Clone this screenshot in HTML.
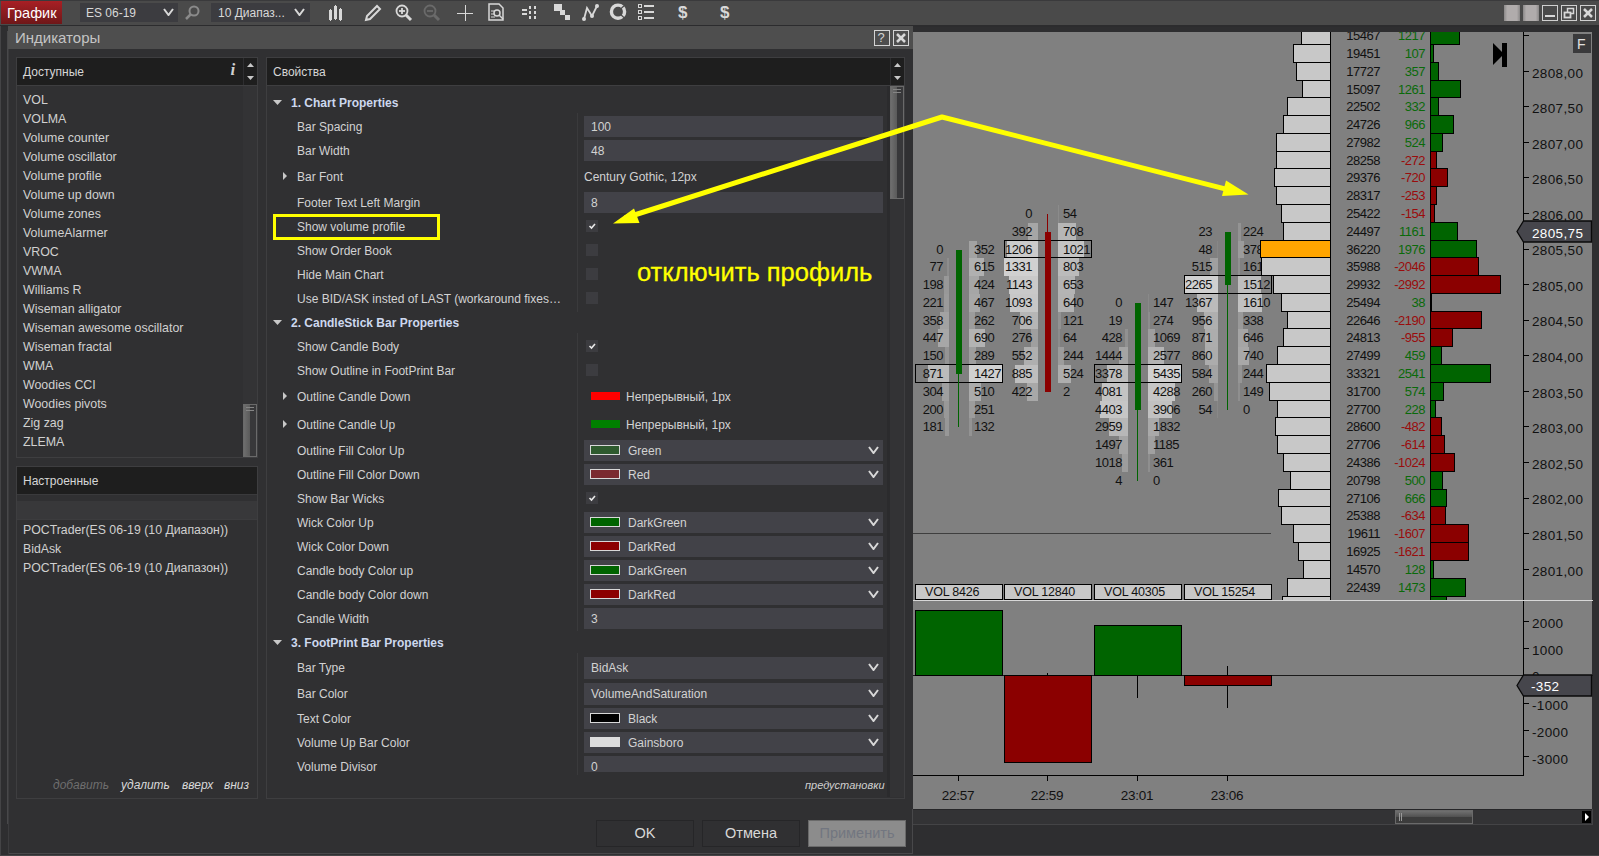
<!DOCTYPE html><html><head><meta charset="utf-8"><style>
html,body{margin:0;padding:0;width:1599px;height:856px;overflow:hidden;background:#2e2e30;font-family:"Liberation Sans", sans-serif;}
.t{position:absolute;white-space:nowrap;line-height:14px;height:14px;margin-top:-7px;font-size:12px;color:#d2d2d2;}
.r{text-align:right;}
.c{position:absolute;white-space:nowrap;line-height:14px;height:14px;margin-top:-7px;font-size:13px;color:#000;}

</style></head><body>
<div style="position:absolute;left:0px;top:0px;width:1599px;height:25px;background:#4a4a4a;"></div>
<div style="position:absolute;left:0px;top:0px;width:1599px;height:1px;background:#3a3a3c;"></div>
<div style="position:absolute;left:0px;top:25px;width:1599px;height:2px;background:#2c2c2e;"></div>
<div style="position:absolute;left:1px;top:1px;width:61px;height:23px;background:linear-gradient(#a81f24,#6f1719);"></div>
<div class="t" style="left:7px;top:12.5px;font-size:14.5px;color:#fff;line-height:18px;height:18px;margin-top:-9px;">График</div>
<div style="position:absolute;left:80px;top:3px;width:98px;height:19px;background:#3c3c40;"></div>
<div class="t" style="left:86px;top:12.5px;font-size:12px;color:#d8d8d8;">ES 06-19</div>
<svg style="position:absolute;left:163px;top:8px" width="11" height="8"><polyline points="1,1 5.5,7 10,1" fill="none" stroke="#d8d8d8" stroke-width="2"/></svg>
<svg style="position:absolute;left:183px;top:4px" width="18" height="16"><circle cx="11" cy="7" r="4.5" fill="none" stroke="#8a8a8a" stroke-width="2"/><line x1="8" y1="10" x2="3" y2="15" stroke="#8a8a8a" stroke-width="2.5"/></svg>
<div style="position:absolute;left:211px;top:3px;width:99px;height:19px;background:#3c3c40;"></div>
<div class="t" style="left:218px;top:12.5px;font-size:12px;color:#d8d8d8;">10 Диапаз...</div>
<svg style="position:absolute;left:294px;top:8px" width="11" height="8"><polyline points="1,1 5.5,7 10,1" fill="none" stroke="#d8d8d8" stroke-width="2"/></svg>
<svg style="position:absolute;left:326px;top:0px" width="20" height="24"><g fill="#d8d8d8"><rect x="3" y="10" width="3" height="10"/><rect x="4" y="9" width="1" height="12"/><rect x="8" y="6" width="3" height="13"/><rect x="9" y="5" width="1" height="15"/><rect x="13" y="9" width="3" height="11"/><rect x="14" y="8" width="1" height="13"/></g></svg>
<svg style="position:absolute;left:363px;top:3px" width="20" height="20"><path d="M3,17 L4,13 L14,3 L17,6 L7,16 Z" fill="none" stroke="#d8d8d8" stroke-width="2"/></svg>
<svg style="position:absolute;left:394px;top:3px" width="20" height="20"><circle cx="8" cy="8" r="5.5" fill="none" stroke="#d8d8d8" stroke-width="1.8"/><line x1="5" y1="8" x2="11" y2="8" stroke="#d8d8d8" stroke-width="1.8"/><line x1="8" y1="5" x2="8" y2="11" stroke="#d8d8d8" stroke-width="1.8"/><line x1="12" y1="12" x2="17" y2="17" stroke="#d8d8d8" stroke-width="3"/></svg>
<svg style="position:absolute;left:422px;top:3px" width="20" height="20"><circle cx="8" cy="8" r="5.5" fill="none" stroke="#6a6a6a" stroke-width="1.8"/><line x1="5" y1="8" x2="11" y2="8" stroke="#6a6a6a" stroke-width="1.8"/><line x1="12" y1="12" x2="17" y2="17" stroke="#6a6a6a" stroke-width="3"/></svg>
<svg style="position:absolute;left:456px;top:3px" width="20" height="20"><line x1="1" y1="10.5" x2="17" y2="10.5" stroke="#d8d8d8" stroke-width="1"/><line x1="9.5" y1="2" x2="9.5" y2="18" stroke="#d8d8d8" stroke-width="1"/></svg>
<svg style="position:absolute;left:487px;top:3px" width="20" height="20"><path d="M2,1 L12,1 L16,5 L16,17 L2,17 Z" fill="none" stroke="#d8d8d8" stroke-width="1.5"/><circle cx="10" cy="10" r="3" fill="none" stroke="#d8d8d8" stroke-width="1.5"/><line x1="12" y1="12" x2="16" y2="16" stroke="#d8d8d8" stroke-width="1.5"/><line x1="4" y1="8" x2="7" y2="8" stroke="#d8d8d8"/><line x1="4" y1="11" x2="7" y2="11" stroke="#d8d8d8"/><line x1="4" y1="14" x2="8" y2="14" stroke="#d8d8d8"/></svg>
<svg style="position:absolute;left:521px;top:3px" width="20" height="20"><g fill="#d8d8d8"><rect x="1" y="6" width="5" height="2"/><rect x="1" y="10" width="5" height="2"/><rect x="8" y="3" width="2" height="3"/><rect x="8" y="8" width="2" height="3"/><rect x="8" y="13" width="2" height="3"/><rect x="13" y="3" width="2" height="3"/><rect x="13" y="8" width="2" height="3"/><rect x="13" y="13" width="2" height="3"/></g></svg>
<svg style="position:absolute;left:553px;top:3px" width="20" height="20"><g fill="#d8d8d8"><rect x="1" y="1" width="8" height="7"/><rect x="7" y="7" width="5" height="5"/><rect x="12" y="12" width="5" height="5"/></g></svg>
<svg style="position:absolute;left:581px;top:3px" width="20" height="20"><polyline points="3,16 6,5 11,13 16,3" fill="none" stroke="#d8d8d8" stroke-width="1.8"/><circle cx="3" cy="16" r="2" fill="#d8d8d8"/><circle cx="11" cy="13" r="2" fill="#d8d8d8"/><circle cx="16" cy="3" r="2" fill="#d8d8d8"/></svg>
<svg style="position:absolute;left:608px;top:0px" width="20" height="24"><circle cx="10" cy="11.7" r="6.6" fill="none" stroke="#d8d8d8" stroke-width="3.4"/><line x1="12" y1="9.5" x2="17" y2="5" stroke="#4a4a4a" stroke-width="1.1"/><line x1="12" y1="14" x2="17" y2="18.5" stroke="#4a4a4a" stroke-width="1.1"/></svg>
<svg style="position:absolute;left:637px;top:3px" width="20" height="20"><g fill="none" stroke="#d8d8d8"><rect x="1.5" y="1.5" width="3" height="3"/><rect x="1.5" y="7.5" width="3" height="3"/><rect x="1.5" y="13.5" width="3" height="3"/></g><g fill="#d8d8d8"><rect x="7" y="2" width="10" height="2"/><rect x="7" y="8" width="10" height="2"/><rect x="7" y="14" width="10" height="2"/></g></svg>
<div class="t" style="left:678px;top:13px;font-size:17px;font-weight:bold;color:#d8d8d8;line-height:20px;height:20px;margin-top:-10px;">$</div>
<div class="t" style="left:720px;top:13px;font-size:17px;font-weight:bold;color:#d8d8d8;line-height:20px;height:20px;margin-top:-10px;">$</div>
<div style="position:absolute;left:1504px;top:5px;width:16px;height:16px;background:linear-gradient(90deg,#8a8888,#b0acac 20%,#b0acac 80%,#8a8888);"></div>
<div style="position:absolute;left:1523px;top:5px;width:16px;height:16px;background:linear-gradient(90deg,#8a8888,#b0acac 20%,#b0acac 80%,#8a8888);"></div>
<div style="position:absolute;left:1542px;top:5px;width:14px;height:14px;border:1px solid #d0d0d0;background:#4a4a4a;"></div>
<div style="position:absolute;left:1561px;top:5px;width:14px;height:14px;border:1px solid #d0d0d0;background:#4a4a4a;"></div>
<div style="position:absolute;left:1580px;top:5px;width:14px;height:14px;border:1px solid #d0d0d0;background:#4a4a4a;"></div>
<div style="position:absolute;left:1545px;top:15px;width:10px;height:2px;background:#d8d8d8;"></div>
<svg style="position:absolute;left:1562px;top:6px" width="14" height="14"><rect x="5.5" y="2.5" width="6" height="5" fill="none" stroke="#d8d8d8" stroke-width="1.5"/><rect x="2.5" y="6.5" width="6" height="5" fill="#4a4a4a" stroke="#d8d8d8" stroke-width="1.8"/></svg>
<svg style="position:absolute;left:1581px;top:6px" width="14" height="14"><line x1="3" y1="3" x2="11" y2="11" stroke="#d8d8d8" stroke-width="2.5"/><line x1="11" y1="3" x2="3" y2="11" stroke="#d8d8d8" stroke-width="2.5"/></svg>
<div style="position:absolute;left:0px;top:27px;width:8px;height:829px;background:#2e2e30;"></div>
<div style="position:absolute;left:8px;top:26px;width:905px;height:830px;background:#303032;"></div>
<div style="position:absolute;left:7px;top:31px;width:1px;height:793px;background:#48484a;"></div>
<div style="position:absolute;left:8px;top:26px;width:905px;height:23px;background:#4e4e4e;"></div>
<div class="t" style="left:15px;top:38px;font-size:15px;color:#c4c4c4;line-height:18px;height:18px;margin-top:-9px;">Индикаторы</div>
<div style="position:absolute;left:874px;top:30px;width:14px;height:14px;border:1px solid #d4d4d4;"></div>
<div class="t" style="left:877.5px;top:37.5px;font-size:13px;color:#d4d4d4;">?</div>
<div style="position:absolute;left:893px;top:30px;width:14px;height:14px;border:1px solid #d4d4d4;"></div>
<svg style="position:absolute;left:894px;top:31px" width="14" height="14"><line x1="3" y1="3" x2="11" y2="11" stroke="#d8d8d8" stroke-width="2.5"/><line x1="11" y1="3" x2="3" y2="11" stroke="#d8d8d8" stroke-width="2.5"/></svg>
<div style="position:absolute;left:8px;top:853px;width:905px;height:1px;background:#48484a;"></div>
<div style="position:absolute;left:0px;top:26px;width:1px;height:830px;background:#444446;"></div>
<div style="position:absolute;left:8px;top:49px;width:1px;height:805px;background:#3c3c3e;"></div>
<div style="position:absolute;left:16px;top:57px;width:240px;height:399px;border:1px solid #3e3e40;background:#303032;"></div>
<div style="position:absolute;left:17px;top:58px;width:240px;height:27px;background:#1e1e1e;"></div>
<div style="position:absolute;left:17px;top:85px;width:240px;height:1px;background:#3e3e40;"></div>
<div class="t" style="left:23px;top:71.5px;color:#d6d6d6;">Доступные</div>
<div class="t" style="left:230.5px;top:70px;font-family:Liberation Serif,serif;font-size:17px;font-weight:bold;color:#d0d0d0;line-height:18px;height:18px;margin-top:-9px;"><i>i</i></div>
<div style="position:absolute;left:243px;top:58px;width:1px;height:27px;background:#2e2e30;"></div>
<svg style="position:absolute;left:247px;top:63px" width="7" height="4"><polygon points="0,4 7,4 3.5,0" fill="#c8c8c8"/></svg>
<svg style="position:absolute;left:247px;top:76px" width="7" height="4"><polygon points="0,0 7,0 3.5,4" fill="#c8c8c8"/></svg>
<div style="position:absolute;left:243px;top:86px;width:14px;height:370px;background:#333335;"></div>
<div style="position:absolute;left:243px;top:404px;width:14px;height:53px;background:linear-gradient(90deg,#6e6e6e,#5a5a5a 50%,#38383a 50%);border:1px solid #6a6a6a;box-sizing:border-box;"></div>
<div style="position:absolute;left:246px;top:407px;width:8px;height:1px;background:#858585;"></div>
<div style="position:absolute;left:246px;top:410px;width:8px;height:1px;background:#858585;"></div>
<div class="t" style="left:23px;top:99.5px;font-size:12.4px;color:#d0d0d0;">VOL</div>
<div class="t" style="left:23px;top:118.5px;font-size:12.4px;color:#d0d0d0;">VOLMA</div>
<div class="t" style="left:23px;top:137.5px;font-size:12.4px;color:#d0d0d0;">Volume counter</div>
<div class="t" style="left:23px;top:156.5px;font-size:12.4px;color:#d0d0d0;">Volume oscillator</div>
<div class="t" style="left:23px;top:175.5px;font-size:12.4px;color:#d0d0d0;">Volume profile</div>
<div class="t" style="left:23px;top:194.5px;font-size:12.4px;color:#d0d0d0;">Volume up down</div>
<div class="t" style="left:23px;top:213.5px;font-size:12.4px;color:#d0d0d0;">Volume zones</div>
<div class="t" style="left:23px;top:232.5px;font-size:12.4px;color:#d0d0d0;">VolumeAlarmer</div>
<div class="t" style="left:23px;top:251.5px;font-size:12.4px;color:#d0d0d0;">VROC</div>
<div class="t" style="left:23px;top:270.5px;font-size:12.4px;color:#d0d0d0;">VWMA</div>
<div class="t" style="left:23px;top:289.5px;font-size:12.4px;color:#d0d0d0;">Williams R</div>
<div class="t" style="left:23px;top:308.5px;font-size:12.4px;color:#d0d0d0;">Wiseman alligator</div>
<div class="t" style="left:23px;top:327.5px;font-size:12.4px;color:#d0d0d0;">Wiseman awesome oscillator</div>
<div class="t" style="left:23px;top:346.5px;font-size:12.4px;color:#d0d0d0;">Wiseman fractal</div>
<div class="t" style="left:23px;top:365.5px;font-size:12.4px;color:#d0d0d0;">WMA</div>
<div class="t" style="left:23px;top:384.5px;font-size:12.4px;color:#d0d0d0;">Woodies CCI</div>
<div class="t" style="left:23px;top:403.5px;font-size:12.4px;color:#d0d0d0;">Woodies pivots</div>
<div class="t" style="left:23px;top:422.5px;font-size:12.4px;color:#d0d0d0;">Zig zag</div>
<div class="t" style="left:23px;top:441.5px;font-size:12.4px;color:#d0d0d0;">ZLEMA</div>
<div style="position:absolute;left:16px;top:466px;width:240px;height:331px;border:1px solid #3e3e40;background:#303032;"></div>
<div style="position:absolute;left:17px;top:467px;width:240px;height:27px;background:#1e1e1e;"></div>
<div class="t" style="left:23px;top:480.5px;color:#d6d6d6;">Настроенные</div>
<div style="position:absolute;left:17px;top:494px;width:240px;height:1px;background:#3a3a3c;"></div>
<div style="position:absolute;left:17px;top:501px;width:240px;height:19px;background:#38383a;"></div>
<div style="position:absolute;left:17px;top:519px;width:240px;height:1px;background:#3c3c3e;"></div>
<div class="t" style="left:23px;top:529.5px;font-size:12.3px;color:#d0d0d0;">POCTrader(ES 06-19 (10 Диапазон))</div>
<div class="t" style="left:23px;top:548.5px;font-size:12.3px;color:#d0d0d0;">BidAsk</div>
<div class="t" style="left:23px;top:567.5px;font-size:12.3px;color:#d0d0d0;">POCTrader(ES 06-19 (10 Диапазон))</div>
<div class="t" style="left:53px;top:785px;font-style:italic;color:#6e6e6e;">добавить</div>
<div class="t" style="left:121px;top:785px;font-style:italic;color:#d8d8d8;">удалить</div>
<div class="t" style="left:182px;top:785px;font-style:italic;color:#d8d8d8;">вверх</div>
<div class="t" style="left:224px;top:785px;font-style:italic;color:#d8d8d8;">вниз</div>
<div style="position:absolute;left:266px;top:57px;width:637px;height:740px;border:1px solid #3e3e40;background:#303032;"></div>
<div style="position:absolute;left:267px;top:58px;width:637px;height:27px;background:#1e1e1e;"></div>
<div style="position:absolute;left:267px;top:85px;width:637px;height:1px;background:#3e3e40;"></div>
<div class="t" style="left:273px;top:71.5px;color:#d6d6d6;">Свойства</div>
<div style="position:absolute;left:890px;top:58px;width:1px;height:27px;background:#2e2e30;"></div>
<svg style="position:absolute;left:894px;top:63px" width="7" height="4"><polygon points="0,4 7,4 3.5,0" fill="#c8c8c8"/></svg>
<svg style="position:absolute;left:894px;top:76px" width="7" height="4"><polygon points="0,0 7,0 3.5,4" fill="#c8c8c8"/></svg>
<div style="position:absolute;left:890px;top:86px;width:14px;height:711px;background:#333335;"></div>
<div style="position:absolute;left:890px;top:86px;width:14px;height:113px;background:linear-gradient(90deg,#6e6e6e,#5a5a5a 50%,#38383a 50%);border:1px solid #6a6a6a;box-sizing:border-box;"></div>
<div style="position:absolute;left:893px;top:89px;width:8px;height:1px;background:#858585;"></div>
<div style="position:absolute;left:893px;top:92px;width:8px;height:1px;background:#858585;"></div>
<div style="position:absolute;left:887px;top:86px;width:3px;height:711px;background:#2b2b2d;"></div>
<div style="position:absolute;left:577px;top:113px;width:1px;height:199px;background:#3a3a3c;"></div>
<div style="position:absolute;left:577px;top:333px;width:1px;height:298px;background:#3a3a3c;"></div>
<div style="position:absolute;left:577px;top:653px;width:1px;height:122px;background:#3a3a3c;"></div>
<svg style="position:absolute;left:273px;top:100px" width="9" height="5"><polygon points="0,0 9,0 4.5,5" fill="#c8c8c8"/></svg>
<div class="t" style="left:291px;top:102.5px;font-weight:bold;color:#cdd8ee;">1. Chart Properties</div>
<div class="t" style="left:297px;top:126.5px;color:#d2d2d2;">Bar Spacing</div>
<div style="position:absolute;left:584px;top:116px;width:299px;height:21px;background:#424248;"></div>
<div class="t" style="left:591px;top:126.5px;">100</div>
<div class="t" style="left:297px;top:150.5px;color:#d2d2d2;">Bar Width</div>
<div style="position:absolute;left:584px;top:140px;width:299px;height:21px;background:#424248;"></div>
<div class="t" style="left:591px;top:150.5px;">48</div>
<svg style="position:absolute;left:283px;top:172px" width="4" height="8"><polygon points="0,0 4,4.0 0,8" fill="#c8c8c8"/></svg>
<div class="t" style="left:297px;top:176.5px;color:#d2d2d2;">Bar Font</div>
<div class="t" style="left:584px;top:176.5px;">Century Gothic, 12px</div>
<div class="t" style="left:297px;top:202.5px;color:#d2d2d2;">Footer Text Left Margin</div>
<div style="position:absolute;left:584px;top:192px;width:299px;height:21px;background:#424248;"></div>
<div class="t" style="left:591px;top:202.5px;">8</div>
<div class="t" style="left:297px;top:226.5px;color:#d2d2d2;">Show volume profile</div>
<div style="position:absolute;left:586px;top:220px;width:12px;height:12px;background:#3c3c40;"></div>
<svg style="position:absolute;left:586px;top:220px" width="12" height="12"><polyline points="3.5,6 5.5,8 9,4" fill="none" stroke="#e8e8e8" stroke-width="1.6"/></svg>
<div class="t" style="left:297px;top:250.5px;color:#d2d2d2;">Show Order Book</div>
<div style="position:absolute;left:586px;top:244px;width:12px;height:12px;background:#3c3c40;"></div>
<div class="t" style="left:297px;top:274.5px;color:#d2d2d2;">Hide Main Chart</div>
<div style="position:absolute;left:586px;top:268px;width:12px;height:12px;background:#3c3c40;"></div>
<div class="t" style="left:297px;top:298.5px;color:#d2d2d2;">Use BID/ASK insted of LAST (workaround fixes…</div>
<div style="position:absolute;left:586px;top:292px;width:12px;height:12px;background:#3c3c40;"></div>
<svg style="position:absolute;left:273px;top:320px" width="9" height="5"><polygon points="0,0 9,0 4.5,5" fill="#c8c8c8"/></svg>
<div class="t" style="left:291px;top:322.5px;font-weight:bold;color:#cdd8ee;">2. CandleStick Bar Properties</div>
<div class="t" style="left:297px;top:346.5px;color:#d2d2d2;">Show Candle Body</div>
<div style="position:absolute;left:586px;top:340px;width:12px;height:12px;background:#3c3c40;"></div>
<svg style="position:absolute;left:586px;top:340px" width="12" height="12"><polyline points="3.5,6 5.5,8 9,4" fill="none" stroke="#e8e8e8" stroke-width="1.6"/></svg>
<div class="t" style="left:297px;top:370.5px;color:#d2d2d2;">Show Outline in FootPrint Bar</div>
<div style="position:absolute;left:586px;top:364px;width:12px;height:12px;background:#3c3c40;"></div>
<svg style="position:absolute;left:283px;top:392px" width="4" height="8"><polygon points="0,0 4,4.0 0,8" fill="#c8c8c8"/></svg>
<div class="t" style="left:297px;top:396.5px;color:#d2d2d2;">Outline Candle Down</div>
<div style="position:absolute;left:591px;top:392px;width:29px;height:8px;background:#f00;"></div>
<div class="t" style="left:626px;top:396.5px;">Непрерывный, 1px</div>
<svg style="position:absolute;left:283px;top:420px" width="4" height="8"><polygon points="0,0 4,4.0 0,8" fill="#c8c8c8"/></svg>
<div class="t" style="left:297px;top:424.5px;color:#d2d2d2;">Outline Candle Up</div>
<div style="position:absolute;left:591px;top:420px;width:29px;height:8px;background:#008000;"></div>
<div class="t" style="left:626px;top:424.5px;">Непрерывный, 1px</div>
<div class="t" style="left:297px;top:450.5px;color:#d2d2d2;">Outline Fill Color Up</div>
<div style="position:absolute;left:584px;top:440px;width:299px;height:21px;background:#424248;"></div>
<div style="position:absolute;left:590px;top:445px;width:30px;height:10px;background:#2e5a2e;border:1px solid #d8d8d8;box-sizing:border-box;"></div>
<div class="t" style="left:628px;top:450.5px;color:#d2d2d2;">Green</div>
<svg style="position:absolute;left:868px;top:446px" width="11" height="8"><polyline points="1,1 5.5,7 10,1" fill="none" stroke="#d8d8d8" stroke-width="2"/></svg>
<div class="t" style="left:297px;top:474.5px;color:#d2d2d2;">Outline Fill Color Down</div>
<div style="position:absolute;left:584px;top:464px;width:299px;height:21px;background:#424248;"></div>
<div style="position:absolute;left:590px;top:469px;width:30px;height:10px;background:#7a2a30;border:1px solid #d8d8d8;box-sizing:border-box;"></div>
<div class="t" style="left:628px;top:474.5px;color:#d2d2d2;">Red</div>
<svg style="position:absolute;left:868px;top:470px" width="11" height="8"><polyline points="1,1 5.5,7 10,1" fill="none" stroke="#d8d8d8" stroke-width="2"/></svg>
<div class="t" style="left:297px;top:498.5px;color:#d2d2d2;">Show Bar Wicks</div>
<div style="position:absolute;left:586px;top:492px;width:12px;height:12px;background:#3c3c40;"></div>
<svg style="position:absolute;left:586px;top:492px" width="12" height="12"><polyline points="3.5,6 5.5,8 9,4" fill="none" stroke="#e8e8e8" stroke-width="1.6"/></svg>
<div class="t" style="left:297px;top:522.5px;color:#d2d2d2;">Wick Color Up</div>
<div style="position:absolute;left:584px;top:512px;width:299px;height:21px;background:#424248;"></div>
<div style="position:absolute;left:590px;top:517px;width:30px;height:10px;background:#006400;border:1px solid #d8d8d8;box-sizing:border-box;"></div>
<div class="t" style="left:628px;top:522.5px;color:#d2d2d2;">DarkGreen</div>
<svg style="position:absolute;left:868px;top:518px" width="11" height="8"><polyline points="1,1 5.5,7 10,1" fill="none" stroke="#d8d8d8" stroke-width="2"/></svg>
<div class="t" style="left:297px;top:546.5px;color:#d2d2d2;">Wick Color Down</div>
<div style="position:absolute;left:584px;top:536px;width:299px;height:21px;background:#424248;"></div>
<div style="position:absolute;left:590px;top:541px;width:30px;height:10px;background:#8b0000;border:1px solid #d8d8d8;box-sizing:border-box;"></div>
<div class="t" style="left:628px;top:546.5px;color:#d2d2d2;">DarkRed</div>
<svg style="position:absolute;left:868px;top:542px" width="11" height="8"><polyline points="1,1 5.5,7 10,1" fill="none" stroke="#d8d8d8" stroke-width="2"/></svg>
<div class="t" style="left:297px;top:570.5px;color:#d2d2d2;">Candle body Color up</div>
<div style="position:absolute;left:584px;top:560px;width:299px;height:21px;background:#424248;"></div>
<div style="position:absolute;left:590px;top:565px;width:30px;height:10px;background:#006400;border:1px solid #d8d8d8;box-sizing:border-box;"></div>
<div class="t" style="left:628px;top:570.5px;color:#d2d2d2;">DarkGreen</div>
<svg style="position:absolute;left:868px;top:566px" width="11" height="8"><polyline points="1,1 5.5,7 10,1" fill="none" stroke="#d8d8d8" stroke-width="2"/></svg>
<div class="t" style="left:297px;top:594.5px;color:#d2d2d2;">Candle body Color down</div>
<div style="position:absolute;left:584px;top:584px;width:299px;height:21px;background:#424248;"></div>
<div style="position:absolute;left:590px;top:589px;width:30px;height:10px;background:#8b0000;border:1px solid #d8d8d8;box-sizing:border-box;"></div>
<div class="t" style="left:628px;top:594.5px;color:#d2d2d2;">DarkRed</div>
<svg style="position:absolute;left:868px;top:590px" width="11" height="8"><polyline points="1,1 5.5,7 10,1" fill="none" stroke="#d8d8d8" stroke-width="2"/></svg>
<div class="t" style="left:297px;top:618.5px;color:#d2d2d2;">Candle Width</div>
<div style="position:absolute;left:584px;top:608px;width:299px;height:21px;background:#424248;"></div>
<div class="t" style="left:591px;top:618.5px;">3</div>
<svg style="position:absolute;left:273px;top:640px" width="9" height="5"><polygon points="0,0 9,0 4.5,5" fill="#c8c8c8"/></svg>
<div class="t" style="left:291px;top:642.5px;font-weight:bold;color:#cdd8ee;">3. FootPrint Bar Properties</div>
<div class="t" style="left:297px;top:667.5px;color:#d2d2d2;">Bar Type</div>
<div style="position:absolute;left:584px;top:657px;width:299px;height:22px;background:#424248;"></div>
<div class="t" style="left:591px;top:667.5px;color:#d2d2d2;">BidAsk</div>
<svg style="position:absolute;left:868px;top:663px" width="11" height="8"><polyline points="1,1 5.5,7 10,1" fill="none" stroke="#d8d8d8" stroke-width="2"/></svg>
<div class="t" style="left:297px;top:693.5px;color:#d2d2d2;">Bar Color</div>
<div style="position:absolute;left:584px;top:683px;width:299px;height:22px;background:#424248;"></div>
<div class="t" style="left:591px;top:693.5px;color:#d2d2d2;">VolumeAndSaturation</div>
<svg style="position:absolute;left:868px;top:689px" width="11" height="8"><polyline points="1,1 5.5,7 10,1" fill="none" stroke="#d8d8d8" stroke-width="2"/></svg>
<div class="t" style="left:297px;top:718.5px;color:#d2d2d2;">Text Color</div>
<div style="position:absolute;left:584px;top:708px;width:299px;height:21px;background:#424248;"></div>
<div style="position:absolute;left:590px;top:713px;width:30px;height:10px;background:#000;border:1px solid #d8d8d8;box-sizing:border-box;"></div>
<div class="t" style="left:628px;top:718.5px;color:#d2d2d2;">Black</div>
<svg style="position:absolute;left:868px;top:714px" width="11" height="8"><polyline points="1,1 5.5,7 10,1" fill="none" stroke="#d8d8d8" stroke-width="2"/></svg>
<div class="t" style="left:297px;top:742.5px;color:#d2d2d2;">Volume Up Bar Color</div>
<div style="position:absolute;left:584px;top:732px;width:299px;height:21px;background:#424248;"></div>
<div style="position:absolute;left:590px;top:737px;width:30px;height:10px;background:#dcdcdc;border:1px solid #dcdcdc;box-sizing:border-box;"></div>
<div class="t" style="left:628px;top:742.5px;color:#d2d2d2;">Gainsboro</div>
<svg style="position:absolute;left:868px;top:738px" width="11" height="8"><polyline points="1,1 5.5,7 10,1" fill="none" stroke="#d8d8d8" stroke-width="2"/></svg>
<div class="t" style="left:297px;top:766.5px;color:#d2d2d2;">Volume Divisor</div>
<div style="position:absolute;left:584px;top:756px;width:299px;height:16px;background:#424248;"></div>
<div class="t" style="left:591px;top:767px;">0</div>
<div class="t" style="left:805px;top:785px;font-style:italic;font-size:11px;color:#d0d0d0;">предустановки</div>
<div style="position:absolute;left:273px;top:214px;width:167px;height:26px;border:3px solid #ffff00;box-sizing:border-box;"></div>
<div style="position:absolute;left:596px;top:820px;width:98px;height:27px;background:transparent;border:1px solid #262628;box-sizing:border-box;"></div>
<div style="position:absolute;left:596px;top:820px;width:98px;height:27px;line-height:27px;text-align:center;font-size:14.5px;color:#d8d8d8;">OK</div>
<div style="position:absolute;left:702px;top:820px;width:98px;height:27px;background:transparent;border:1px solid #262628;box-sizing:border-box;"></div>
<div style="position:absolute;left:702px;top:820px;width:98px;height:27px;line-height:27px;text-align:center;font-size:14.5px;color:#d8d8d8;">Отмена</div>
<div style="position:absolute;left:808px;top:820px;width:98px;height:27px;background:#8c8c8c;border:1px solid #6a6a6a;box-sizing:border-box;"></div>
<div style="position:absolute;left:808px;top:820px;width:98px;height:27px;line-height:27px;text-align:center;font-size:14.5px;color:#727680;">Применить</div>
<div style="position:absolute;left:913px;top:27px;width:686px;height:829px;background:#2e2e30;"></div>
<div style="position:absolute;left:913px;top:31px;width:679px;height:778px;background:#808080;"></div>
<div style="position:absolute;left:969px;top:241px;width:8px;height:17px;background:rgb(162,162,162);"></div>
<div style="position:absolute;left:947px;top:258px;width:2px;height:18px;background:rgb(141,141,141);"></div>
<div style="position:absolute;left:969px;top:258px;width:15px;height:18px;background:rgb(176,176,176);"></div>
<div style="position:absolute;left:944px;top:276px;width:5px;height:18px;background:rgb(152,152,152);"></div>
<div style="position:absolute;left:969px;top:276px;width:10px;height:18px;background:rgb(166,166,166);"></div>
<div style="position:absolute;left:944px;top:294px;width:5px;height:18px;background:rgb(154,154,154);"></div>
<div style="position:absolute;left:969px;top:294px;width:11px;height:18px;background:rgb(168,168,168);"></div>
<div style="position:absolute;left:940px;top:312px;width:9px;height:17px;background:rgb(162,162,162);"></div>
<div style="position:absolute;left:969px;top:312px;width:6px;height:17px;background:rgb(156,156,156);"></div>
<div style="position:absolute;left:938px;top:329px;width:11px;height:18px;background:rgb(167,167,167);"></div>
<div style="position:absolute;left:969px;top:329px;width:16px;height:18px;background:rgb(179,179,179);"></div>
<div style="position:absolute;left:945px;top:347px;width:4px;height:18px;background:rgb(148,148,148);"></div>
<div style="position:absolute;left:969px;top:347px;width:7px;height:18px;background:rgb(158,158,158);"></div>
<div style="position:absolute;left:928px;top:365px;width:21px;height:18px;background:rgb(187,187,187);"></div>
<div style="position:absolute;left:969px;top:365px;width:34px;height:18px;background:rgb(208,208,208);"></div>
<div style="position:absolute;left:942px;top:383px;width:7px;height:18px;background:rgb(159,159,159);"></div>
<div style="position:absolute;left:969px;top:383px;width:12px;height:18px;background:rgb(171,171,171);"></div>
<div style="position:absolute;left:944px;top:401px;width:5px;height:17px;background:rgb(152,152,152);"></div>
<div style="position:absolute;left:969px;top:401px;width:6px;height:17px;background:rgb(156,156,156);"></div>
<div style="position:absolute;left:945px;top:418px;width:4px;height:18px;background:rgb(151,151,151);"></div>
<div style="position:absolute;left:969px;top:418px;width:3px;height:18px;background:rgb(147,147,147);"></div>
<div class="c r" style="right:656px;top:250px;font-size:13px;letter-spacing:-0.5px;color:#111;">0</div>
<div class="c" style="left:974px;top:250px;font-size:13px;letter-spacing:-0.5px;color:#111;">352</div>
<div class="c r" style="right:656px;top:267px;font-size:13px;letter-spacing:-0.5px;color:#111;">77</div>
<div class="c" style="left:974px;top:267px;font-size:13px;letter-spacing:-0.5px;color:#111;">615</div>
<div class="c r" style="right:656px;top:285px;font-size:13px;letter-spacing:-0.5px;color:#111;">198</div>
<div class="c" style="left:974px;top:285px;font-size:13px;letter-spacing:-0.5px;color:#111;">424</div>
<div class="c r" style="right:656px;top:303px;font-size:13px;letter-spacing:-0.5px;color:#111;">221</div>
<div class="c" style="left:974px;top:303px;font-size:13px;letter-spacing:-0.5px;color:#111;">467</div>
<div class="c r" style="right:656px;top:321px;font-size:13px;letter-spacing:-0.5px;color:#111;">358</div>
<div class="c" style="left:974px;top:321px;font-size:13px;letter-spacing:-0.5px;color:#111;">262</div>
<div class="c r" style="right:656px;top:338px;font-size:13px;letter-spacing:-0.5px;color:#111;">447</div>
<div class="c" style="left:974px;top:338px;font-size:13px;letter-spacing:-0.5px;color:#111;">690</div>
<div class="c r" style="right:656px;top:356px;font-size:13px;letter-spacing:-0.5px;color:#111;">150</div>
<div class="c" style="left:974px;top:356px;font-size:13px;letter-spacing:-0.5px;color:#111;">289</div>
<div class="c r" style="right:656px;top:374px;font-size:13px;letter-spacing:-0.5px;color:#111;">871</div>
<div class="c" style="left:974px;top:374px;font-size:13px;letter-spacing:-0.5px;color:#111;">1427</div>
<div class="c r" style="right:656px;top:392px;font-size:13px;letter-spacing:-0.5px;color:#111;">304</div>
<div class="c" style="left:974px;top:392px;font-size:13px;letter-spacing:-0.5px;color:#111;">510</div>
<div class="c r" style="right:656px;top:410px;font-size:13px;letter-spacing:-0.5px;color:#111;">200</div>
<div class="c" style="left:974px;top:410px;font-size:13px;letter-spacing:-0.5px;color:#111;">251</div>
<div class="c r" style="right:656px;top:427px;font-size:13px;letter-spacing:-0.5px;color:#111;">181</div>
<div class="c" style="left:974px;top:427px;font-size:13px;letter-spacing:-0.5px;color:#111;">132</div>
<div style="position:absolute;left:915px;top:364px;width:88px;height:19px;border:1px solid #000;box-sizing:border-box;"></div>
<div style="position:absolute;left:956px;top:250px;width:6px;height:124px;background:#006400;"></div>
<div style="position:absolute;left:958px;top:374px;width:1px;height:53px;background:#006400;"></div>
<div style="position:absolute;left:1058px;top:205px;width:1px;height:18px;background:rgb(139,139,139);"></div>
<div style="position:absolute;left:1028px;top:223px;width:10px;height:18px;background:rgb(166,166,166);"></div>
<div style="position:absolute;left:1058px;top:223px;width:18px;height:18px;background:rgb(182,182,182);"></div>
<div style="position:absolute;left:1007px;top:241px;width:31px;height:17px;background:rgb(203,203,203);"></div>
<div style="position:absolute;left:1058px;top:241px;width:26px;height:17px;background:rgb(196,196,196);"></div>
<div style="position:absolute;left:1004px;top:258px;width:34px;height:18px;background:rgb(208,208,208);"></div>
<div style="position:absolute;left:1058px;top:258px;width:21px;height:18px;background:rgb(187,187,187);"></div>
<div style="position:absolute;left:1009px;top:276px;width:29px;height:18px;background:rgb(201,201,201);"></div>
<div style="position:absolute;left:1058px;top:276px;width:17px;height:18px;background:rgb(180,180,180);"></div>
<div style="position:absolute;left:1010px;top:294px;width:28px;height:18px;background:rgb(199,199,199);"></div>
<div style="position:absolute;left:1058px;top:294px;width:16px;height:18px;background:rgb(179,179,179);"></div>
<div style="position:absolute;left:1020px;top:312px;width:18px;height:17px;background:rgb(182,182,182);"></div>
<div style="position:absolute;left:1058px;top:312px;width:3px;height:17px;background:rgb(146,146,146);"></div>
<div style="position:absolute;left:1031px;top:329px;width:7px;height:18px;background:rgb(159,159,159);"></div>
<div style="position:absolute;left:1058px;top:329px;width:2px;height:18px;background:rgb(140,140,140);"></div>
<div style="position:absolute;left:1024px;top:347px;width:14px;height:18px;background:rgb(175,175,175);"></div>
<div style="position:absolute;left:1058px;top:347px;width:6px;height:18px;background:rgb(156,156,156);"></div>
<div style="position:absolute;left:1015px;top:365px;width:23px;height:18px;background:rgb(190,190,190);"></div>
<div style="position:absolute;left:1058px;top:365px;width:13px;height:18px;background:rgb(173,173,173);"></div>
<div style="position:absolute;left:1027px;top:383px;width:11px;height:18px;background:rgb(168,168,168);"></div>
<div class="c r" style="right:567px;top:214px;font-size:13px;letter-spacing:-0.5px;color:#111;">0</div>
<div class="c" style="left:1063px;top:214px;font-size:13px;letter-spacing:-0.5px;color:#111;">54</div>
<div class="c r" style="right:567px;top:232px;font-size:13px;letter-spacing:-0.5px;color:#111;">392</div>
<div class="c" style="left:1063px;top:232px;font-size:13px;letter-spacing:-0.5px;color:#111;">708</div>
<div class="c r" style="right:567px;top:250px;font-size:13px;letter-spacing:-0.5px;color:#111;">1206</div>
<div class="c" style="left:1063px;top:250px;font-size:13px;letter-spacing:-0.5px;color:#111;">1021</div>
<div class="c r" style="right:567px;top:267px;font-size:13px;letter-spacing:-0.5px;color:#111;">1331</div>
<div class="c" style="left:1063px;top:267px;font-size:13px;letter-spacing:-0.5px;color:#111;">803</div>
<div class="c r" style="right:567px;top:285px;font-size:13px;letter-spacing:-0.5px;color:#111;">1143</div>
<div class="c" style="left:1063px;top:285px;font-size:13px;letter-spacing:-0.5px;color:#111;">653</div>
<div class="c r" style="right:567px;top:303px;font-size:13px;letter-spacing:-0.5px;color:#111;">1093</div>
<div class="c" style="left:1063px;top:303px;font-size:13px;letter-spacing:-0.5px;color:#111;">640</div>
<div class="c r" style="right:567px;top:321px;font-size:13px;letter-spacing:-0.5px;color:#111;">706</div>
<div class="c" style="left:1063px;top:321px;font-size:13px;letter-spacing:-0.5px;color:#111;">121</div>
<div class="c r" style="right:567px;top:338px;font-size:13px;letter-spacing:-0.5px;color:#111;">276</div>
<div class="c" style="left:1063px;top:338px;font-size:13px;letter-spacing:-0.5px;color:#111;">64</div>
<div class="c r" style="right:567px;top:356px;font-size:13px;letter-spacing:-0.5px;color:#111;">552</div>
<div class="c" style="left:1063px;top:356px;font-size:13px;letter-spacing:-0.5px;color:#111;">244</div>
<div class="c r" style="right:567px;top:374px;font-size:13px;letter-spacing:-0.5px;color:#111;">885</div>
<div class="c" style="left:1063px;top:374px;font-size:13px;letter-spacing:-0.5px;color:#111;">524</div>
<div class="c r" style="right:567px;top:392px;font-size:13px;letter-spacing:-0.5px;color:#111;">422</div>
<div class="c" style="left:1063px;top:392px;font-size:13px;letter-spacing:-0.5px;color:#111;">2</div>
<div style="position:absolute;left:1004px;top:240px;width:88px;height:18px;border:1px solid #000;box-sizing:border-box;"></div>
<div style="position:absolute;left:1045px;top:232px;width:6px;height:160px;background:#8b0000;"></div>
<div style="position:absolute;left:1047px;top:214px;width:1px;height:18px;background:#8b0000;"></div>
<div style="position:absolute;left:1148px;top:294px;width:1px;height:18px;background:rgb(137,137,137);"></div>
<div style="position:absolute;left:1148px;top:312px;width:2px;height:17px;background:rgb(141,141,141);"></div>
<div style="position:absolute;left:1125px;top:329px;width:3px;height:18px;background:rgb(145,145,145);"></div>
<div style="position:absolute;left:1148px;top:329px;width:7px;height:18px;background:rgb(158,158,158);"></div>
<div style="position:absolute;left:1119px;top:347px;width:9px;height:18px;background:rgb(164,164,164);"></div>
<div style="position:absolute;left:1148px;top:347px;width:16px;height:18px;background:rgb(179,179,179);"></div>
<div style="position:absolute;left:1107px;top:365px;width:21px;height:18px;background:rgb(188,188,188);"></div>
<div style="position:absolute;left:1148px;top:365px;width:34px;height:18px;background:rgb(208,208,208);"></div>
<div style="position:absolute;left:1102px;top:383px;width:26px;height:18px;background:rgb(195,195,195);"></div>
<div style="position:absolute;left:1148px;top:383px;width:27px;height:18px;background:rgb(197,197,197);"></div>
<div style="position:absolute;left:1100px;top:401px;width:28px;height:17px;background:rgb(198,198,198);"></div>
<div style="position:absolute;left:1148px;top:401px;width:24px;height:17px;background:rgb(193,193,193);"></div>
<div style="position:absolute;left:1109px;top:418px;width:19px;height:18px;background:rgb(183,183,183);"></div>
<div style="position:absolute;left:1148px;top:418px;width:11px;height:18px;background:rgb(169,169,169);"></div>
<div style="position:absolute;left:1119px;top:436px;width:9px;height:18px;background:rgb(164,164,164);"></div>
<div style="position:absolute;left:1148px;top:436px;width:7px;height:18px;background:rgb(160,160,160);"></div>
<div style="position:absolute;left:1122px;top:454px;width:6px;height:18px;background:rgb(157,157,157);"></div>
<div style="position:absolute;left:1148px;top:454px;width:2px;height:18px;background:rgb(143,143,143);"></div>
<div class="c r" style="right:477px;top:303px;font-size:13px;letter-spacing:-0.5px;color:#111;">0</div>
<div class="c" style="left:1153px;top:303px;font-size:13px;letter-spacing:-0.5px;color:#111;">147</div>
<div class="c r" style="right:477px;top:321px;font-size:13px;letter-spacing:-0.5px;color:#111;">19</div>
<div class="c" style="left:1153px;top:321px;font-size:13px;letter-spacing:-0.5px;color:#111;">274</div>
<div class="c r" style="right:477px;top:338px;font-size:13px;letter-spacing:-0.5px;color:#111;">428</div>
<div class="c" style="left:1153px;top:338px;font-size:13px;letter-spacing:-0.5px;color:#111;">1069</div>
<div class="c r" style="right:477px;top:356px;font-size:13px;letter-spacing:-0.5px;color:#111;">1444</div>
<div class="c" style="left:1153px;top:356px;font-size:13px;letter-spacing:-0.5px;color:#111;">2577</div>
<div class="c r" style="right:477px;top:374px;font-size:13px;letter-spacing:-0.5px;color:#111;">3378</div>
<div class="c" style="left:1153px;top:374px;font-size:13px;letter-spacing:-0.5px;color:#111;">5435</div>
<div class="c r" style="right:477px;top:392px;font-size:13px;letter-spacing:-0.5px;color:#111;">4081</div>
<div class="c" style="left:1153px;top:392px;font-size:13px;letter-spacing:-0.5px;color:#111;">4288</div>
<div class="c r" style="right:477px;top:410px;font-size:13px;letter-spacing:-0.5px;color:#111;">4403</div>
<div class="c" style="left:1153px;top:410px;font-size:13px;letter-spacing:-0.5px;color:#111;">3906</div>
<div class="c r" style="right:477px;top:427px;font-size:13px;letter-spacing:-0.5px;color:#111;">2959</div>
<div class="c" style="left:1153px;top:427px;font-size:13px;letter-spacing:-0.5px;color:#111;">1832</div>
<div class="c r" style="right:477px;top:445px;font-size:13px;letter-spacing:-0.5px;color:#111;">1497</div>
<div class="c" style="left:1153px;top:445px;font-size:13px;letter-spacing:-0.5px;color:#111;">1185</div>
<div class="c r" style="right:477px;top:463px;font-size:13px;letter-spacing:-0.5px;color:#111;">1018</div>
<div class="c" style="left:1153px;top:463px;font-size:13px;letter-spacing:-0.5px;color:#111;">361</div>
<div class="c r" style="right:477px;top:481px;font-size:13px;letter-spacing:-0.5px;color:#111;">4</div>
<div class="c" style="left:1153px;top:481px;font-size:13px;letter-spacing:-0.5px;color:#111;">0</div>
<div style="position:absolute;left:1094px;top:364px;width:88px;height:19px;border:1px solid #000;box-sizing:border-box;"></div>
<div style="position:absolute;left:1135px;top:303px;width:6px;height:107px;background:#006400;"></div>
<div style="position:absolute;left:1137px;top:410px;width:1px;height:71px;background:#006400;"></div>
<div style="position:absolute;left:1238px;top:223px;width:3px;height:18px;background:rgb(147,147,147);"></div>
<div style="position:absolute;left:1217px;top:241px;width:1px;height:17px;background:rgb(135,135,135);"></div>
<div style="position:absolute;left:1238px;top:241px;width:6px;height:17px;background:rgb(155,155,155);"></div>
<div style="position:absolute;left:1210px;top:258px;width:8px;height:18px;background:rgb(160,160,160);"></div>
<div style="position:absolute;left:1238px;top:258px;width:2px;height:18px;background:rgb(144,144,144);"></div>
<div style="position:absolute;left:1184px;top:276px;width:34px;height:18px;background:rgb(208,208,208);"></div>
<div style="position:absolute;left:1238px;top:276px;width:23px;height:18px;background:rgb(190,190,190);"></div>
<div style="position:absolute;left:1197px;top:294px;width:21px;height:18px;background:rgb(187,187,187);"></div>
<div style="position:absolute;left:1238px;top:294px;width:24px;height:18px;background:rgb(193,193,193);"></div>
<div style="position:absolute;left:1204px;top:312px;width:14px;height:17px;background:rgb(175,175,175);"></div>
<div style="position:absolute;left:1238px;top:312px;width:5px;height:17px;background:rgb(153,153,153);"></div>
<div style="position:absolute;left:1205px;top:329px;width:13px;height:18px;background:rgb(173,173,173);"></div>
<div style="position:absolute;left:1238px;top:329px;width:10px;height:18px;background:rgb(165,165,165);"></div>
<div style="position:absolute;left:1205px;top:347px;width:13px;height:18px;background:rgb(172,172,172);"></div>
<div style="position:absolute;left:1238px;top:347px;width:11px;height:18px;background:rgb(168,168,168);"></div>
<div style="position:absolute;left:1209px;top:365px;width:9px;height:18px;background:rgb(163,163,163);"></div>
<div style="position:absolute;left:1238px;top:365px;width:4px;height:18px;background:rgb(149,149,149);"></div>
<div style="position:absolute;left:1214px;top:383px;width:4px;height:18px;background:rgb(149,149,149);"></div>
<div style="position:absolute;left:1238px;top:383px;width:2px;height:18px;background:rgb(143,143,143);"></div>
<div style="position:absolute;left:1217px;top:401px;width:1px;height:17px;background:rgb(136,136,136);"></div>
<div class="c r" style="right:387px;top:232px;font-size:13px;letter-spacing:-0.5px;color:#111;">23</div>
<div class="c" style="left:1243px;top:232px;font-size:13px;letter-spacing:-0.5px;color:#111;">224</div>
<div class="c r" style="right:387px;top:250px;font-size:13px;letter-spacing:-0.5px;color:#111;">48</div>
<div class="c" style="left:1243px;top:250px;font-size:13px;letter-spacing:-0.5px;color:#111;">378</div>
<div class="c r" style="right:387px;top:267px;font-size:13px;letter-spacing:-0.5px;color:#111;">515</div>
<div class="c" style="left:1243px;top:267px;font-size:13px;letter-spacing:-0.5px;color:#111;">161</div>
<div class="c r" style="right:387px;top:285px;font-size:13px;letter-spacing:-0.5px;color:#111;">2265</div>
<div class="c" style="left:1243px;top:285px;font-size:13px;letter-spacing:-0.5px;color:#111;">1512</div>
<div class="c r" style="right:387px;top:303px;font-size:13px;letter-spacing:-0.5px;color:#111;">1367</div>
<div class="c" style="left:1243px;top:303px;font-size:13px;letter-spacing:-0.5px;color:#111;">1610</div>
<div class="c r" style="right:387px;top:321px;font-size:13px;letter-spacing:-0.5px;color:#111;">956</div>
<div class="c" style="left:1243px;top:321px;font-size:13px;letter-spacing:-0.5px;color:#111;">338</div>
<div class="c r" style="right:387px;top:338px;font-size:13px;letter-spacing:-0.5px;color:#111;">871</div>
<div class="c" style="left:1243px;top:338px;font-size:13px;letter-spacing:-0.5px;color:#111;">646</div>
<div class="c r" style="right:387px;top:356px;font-size:13px;letter-spacing:-0.5px;color:#111;">860</div>
<div class="c" style="left:1243px;top:356px;font-size:13px;letter-spacing:-0.5px;color:#111;">740</div>
<div class="c r" style="right:387px;top:374px;font-size:13px;letter-spacing:-0.5px;color:#111;">584</div>
<div class="c" style="left:1243px;top:374px;font-size:13px;letter-spacing:-0.5px;color:#111;">244</div>
<div class="c r" style="right:387px;top:392px;font-size:13px;letter-spacing:-0.5px;color:#111;">260</div>
<div class="c" style="left:1243px;top:392px;font-size:13px;letter-spacing:-0.5px;color:#111;">149</div>
<div class="c r" style="right:387px;top:410px;font-size:13px;letter-spacing:-0.5px;color:#111;">54</div>
<div class="c" style="left:1243px;top:410px;font-size:13px;letter-spacing:-0.5px;color:#111;">0</div>
<div style="position:absolute;left:1184px;top:275px;width:88px;height:19px;border:1px solid #000;box-sizing:border-box;"></div>
<div style="position:absolute;left:1225px;top:232px;width:6px;height:53px;background:#006400;"></div>
<div style="position:absolute;left:1227px;top:285px;width:1px;height:125px;background:#006400;"></div>
<div style="position:absolute;left:913px;top:533px;width:358px;height:1px;background:#3e3e3e;"></div>
<div style="position:absolute;left:1301px;top:30px;width:30px;height:15px;background:#c8c8c8;border:1px solid #000;box-sizing:border-box;"></div>
<div style="position:absolute;left:1430px;top:30px;width:30px;height:15px;background:#006400;border:1px solid #000;box-sizing:border-box;"></div>
<div class="c r" style="right:219px;top:36px;font-size:13px;letter-spacing:-0.5px;color:#111;">15467</div>
<div class="c r" style="right:174px;top:36px;font-size:13px;letter-spacing:-0.5px;color:#111;color:#0a6a0a;">1217</div>
<div style="position:absolute;left:1293px;top:44px;width:38px;height:19px;background:#c8c8c8;border:1px solid #000;box-sizing:border-box;"></div>
<div style="position:absolute;left:1430px;top:44px;width:4px;height:19px;background:#006400;border:1px solid #000;box-sizing:border-box;"></div>
<div class="c r" style="right:219px;top:54px;font-size:13px;letter-spacing:-0.5px;color:#111;">19451</div>
<div class="c r" style="right:174px;top:54px;font-size:13px;letter-spacing:-0.5px;color:#111;color:#0a6a0a;">107</div>
<div style="position:absolute;left:1296px;top:62px;width:35px;height:19px;background:#c8c8c8;border:1px solid #000;box-sizing:border-box;"></div>
<div style="position:absolute;left:1430px;top:62px;width:9px;height:19px;background:#006400;border:1px solid #000;box-sizing:border-box;"></div>
<div class="c r" style="right:219px;top:72px;font-size:13px;letter-spacing:-0.5px;color:#111;">17727</div>
<div class="c r" style="right:174px;top:72px;font-size:13px;letter-spacing:-0.5px;color:#111;color:#0a6a0a;">357</div>
<div style="position:absolute;left:1302px;top:80px;width:29px;height:18px;background:#c8c8c8;border:1px solid #000;box-sizing:border-box;"></div>
<div style="position:absolute;left:1430px;top:80px;width:31px;height:18px;background:#006400;border:1px solid #000;box-sizing:border-box;"></div>
<div class="c r" style="right:219px;top:90px;font-size:13px;letter-spacing:-0.5px;color:#111;">15097</div>
<div class="c r" style="right:174px;top:90px;font-size:13px;letter-spacing:-0.5px;color:#111;color:#0a6a0a;">1261</div>
<div style="position:absolute;left:1287px;top:97px;width:44px;height:19px;background:#c8c8c8;border:1px solid #000;box-sizing:border-box;"></div>
<div style="position:absolute;left:1430px;top:97px;width:9px;height:19px;background:#006400;border:1px solid #000;box-sizing:border-box;"></div>
<div class="c r" style="right:219px;top:107px;font-size:13px;letter-spacing:-0.5px;color:#111;">22502</div>
<div class="c r" style="right:174px;top:107px;font-size:13px;letter-spacing:-0.5px;color:#111;color:#0a6a0a;">332</div>
<div style="position:absolute;left:1283px;top:115px;width:48px;height:19px;background:#c8c8c8;border:1px solid #000;box-sizing:border-box;"></div>
<div style="position:absolute;left:1430px;top:115px;width:24px;height:19px;background:#006400;border:1px solid #000;box-sizing:border-box;"></div>
<div class="c r" style="right:219px;top:125px;font-size:13px;letter-spacing:-0.5px;color:#111;">24726</div>
<div class="c r" style="right:174px;top:125px;font-size:13px;letter-spacing:-0.5px;color:#111;color:#0a6a0a;">966</div>
<div style="position:absolute;left:1276px;top:133px;width:55px;height:19px;background:#c8c8c8;border:1px solid #000;box-sizing:border-box;"></div>
<div style="position:absolute;left:1430px;top:133px;width:13px;height:19px;background:#006400;border:1px solid #000;box-sizing:border-box;"></div>
<div class="c r" style="right:219px;top:143px;font-size:13px;letter-spacing:-0.5px;color:#111;">27982</div>
<div class="c r" style="right:174px;top:143px;font-size:13px;letter-spacing:-0.5px;color:#111;color:#0a6a0a;">524</div>
<div style="position:absolute;left:1276px;top:151px;width:55px;height:18px;background:#c8c8c8;border:1px solid #000;box-sizing:border-box;"></div>
<div style="position:absolute;left:1430px;top:151px;width:7px;height:18px;background:#8b0000;border:1px solid #000;box-sizing:border-box;"></div>
<div class="c r" style="right:219px;top:161px;font-size:13px;letter-spacing:-0.5px;color:#111;">28258</div>
<div class="c r" style="right:174px;top:161px;font-size:13px;letter-spacing:-0.5px;color:#111;color:#9a0c0c;">-272</div>
<div style="position:absolute;left:1274px;top:168px;width:57px;height:19px;background:#c8c8c8;border:1px solid #000;box-sizing:border-box;"></div>
<div style="position:absolute;left:1430px;top:168px;width:18px;height:19px;background:#8b0000;border:1px solid #000;box-sizing:border-box;"></div>
<div class="c r" style="right:219px;top:178px;font-size:13px;letter-spacing:-0.5px;color:#111;">29376</div>
<div class="c r" style="right:174px;top:178px;font-size:13px;letter-spacing:-0.5px;color:#111;color:#9a0c0c;">-720</div>
<div style="position:absolute;left:1276px;top:186px;width:55px;height:19px;background:#c8c8c8;border:1px solid #000;box-sizing:border-box;"></div>
<div style="position:absolute;left:1430px;top:186px;width:7px;height:19px;background:#8b0000;border:1px solid #000;box-sizing:border-box;"></div>
<div class="c r" style="right:219px;top:196px;font-size:13px;letter-spacing:-0.5px;color:#111;">28317</div>
<div class="c r" style="right:174px;top:196px;font-size:13px;letter-spacing:-0.5px;color:#111;color:#9a0c0c;">-253</div>
<div style="position:absolute;left:1281px;top:204px;width:50px;height:19px;background:#c8c8c8;border:1px solid #000;box-sizing:border-box;"></div>
<div style="position:absolute;left:1430px;top:204px;width:5px;height:19px;background:#8b0000;border:1px solid #000;box-sizing:border-box;"></div>
<div class="c r" style="right:219px;top:214px;font-size:13px;letter-spacing:-0.5px;color:#111;">25422</div>
<div class="c r" style="right:174px;top:214px;font-size:13px;letter-spacing:-0.5px;color:#111;color:#9a0c0c;">-154</div>
<div style="position:absolute;left:1283px;top:222px;width:48px;height:19px;background:#c8c8c8;border:1px solid #000;box-sizing:border-box;"></div>
<div style="position:absolute;left:1430px;top:222px;width:28px;height:19px;background:#006400;border:1px solid #000;box-sizing:border-box;"></div>
<div class="c r" style="right:219px;top:232px;font-size:13px;letter-spacing:-0.5px;color:#111;">24497</div>
<div class="c r" style="right:174px;top:232px;font-size:13px;letter-spacing:-0.5px;color:#111;color:#0a6a0a;">1161</div>
<div style="position:absolute;left:1260px;top:240px;width:71px;height:18px;background:#ffa500;border:1px solid #000;box-sizing:border-box;"></div>
<div style="position:absolute;left:1430px;top:240px;width:47px;height:18px;background:#006400;border:1px solid #000;box-sizing:border-box;"></div>
<div class="c r" style="right:219px;top:250px;font-size:13px;letter-spacing:-0.5px;color:#111;">36220</div>
<div class="c r" style="right:174px;top:250px;font-size:13px;letter-spacing:-0.5px;color:#111;color:#0a6a0a;">1976</div>
<div style="position:absolute;left:1261px;top:257px;width:70px;height:19px;background:#c8c8c8;border:1px solid #000;box-sizing:border-box;"></div>
<div style="position:absolute;left:1430px;top:257px;width:49px;height:19px;background:#8b0000;border:1px solid #000;box-sizing:border-box;"></div>
<div class="c r" style="right:219px;top:267px;font-size:13px;letter-spacing:-0.5px;color:#111;">35988</div>
<div class="c r" style="right:174px;top:267px;font-size:13px;letter-spacing:-0.5px;color:#111;color:#9a0c0c;">-2046</div>
<div style="position:absolute;left:1273px;top:275px;width:58px;height:19px;background:#c8c8c8;border:1px solid #000;box-sizing:border-box;"></div>
<div style="position:absolute;left:1430px;top:275px;width:71px;height:19px;background:#8b0000;border:1px solid #000;box-sizing:border-box;"></div>
<div class="c r" style="right:219px;top:285px;font-size:13px;letter-spacing:-0.5px;color:#111;">29932</div>
<div class="c r" style="right:174px;top:285px;font-size:13px;letter-spacing:-0.5px;color:#111;color:#9a0c0c;">-2992</div>
<div style="position:absolute;left:1281px;top:293px;width:50px;height:19px;background:#c8c8c8;border:1px solid #000;box-sizing:border-box;"></div>
<div style="position:absolute;left:1430px;top:293px;width:2px;height:19px;background:#006400;border:1px solid #000;box-sizing:border-box;"></div>
<div class="c r" style="right:219px;top:303px;font-size:13px;letter-spacing:-0.5px;color:#111;">25494</div>
<div class="c r" style="right:174px;top:303px;font-size:13px;letter-spacing:-0.5px;color:#111;color:#0a6a0a;">38</div>
<div style="position:absolute;left:1287px;top:311px;width:44px;height:18px;background:#c8c8c8;border:1px solid #000;box-sizing:border-box;"></div>
<div style="position:absolute;left:1430px;top:311px;width:52px;height:18px;background:#8b0000;border:1px solid #000;box-sizing:border-box;"></div>
<div class="c r" style="right:219px;top:321px;font-size:13px;letter-spacing:-0.5px;color:#111;">22646</div>
<div class="c r" style="right:174px;top:321px;font-size:13px;letter-spacing:-0.5px;color:#111;color:#9a0c0c;">-2190</div>
<div style="position:absolute;left:1283px;top:328px;width:48px;height:19px;background:#c8c8c8;border:1px solid #000;box-sizing:border-box;"></div>
<div style="position:absolute;left:1430px;top:328px;width:23px;height:19px;background:#8b0000;border:1px solid #000;box-sizing:border-box;"></div>
<div class="c r" style="right:219px;top:338px;font-size:13px;letter-spacing:-0.5px;color:#111;">24813</div>
<div class="c r" style="right:174px;top:338px;font-size:13px;letter-spacing:-0.5px;color:#111;color:#9a0c0c;">-955</div>
<div style="position:absolute;left:1277px;top:346px;width:54px;height:19px;background:#c8c8c8;border:1px solid #000;box-sizing:border-box;"></div>
<div style="position:absolute;left:1430px;top:346px;width:12px;height:19px;background:#006400;border:1px solid #000;box-sizing:border-box;"></div>
<div class="c r" style="right:219px;top:356px;font-size:13px;letter-spacing:-0.5px;color:#111;">27499</div>
<div class="c r" style="right:174px;top:356px;font-size:13px;letter-spacing:-0.5px;color:#111;color:#0a6a0a;">459</div>
<div style="position:absolute;left:1266px;top:364px;width:65px;height:19px;background:#c8c8c8;border:1px solid #000;box-sizing:border-box;"></div>
<div style="position:absolute;left:1430px;top:364px;width:61px;height:19px;background:#006400;border:1px solid #000;box-sizing:border-box;"></div>
<div class="c r" style="right:219px;top:374px;font-size:13px;letter-spacing:-0.5px;color:#111;">33321</div>
<div class="c r" style="right:174px;top:374px;font-size:13px;letter-spacing:-0.5px;color:#111;color:#0a6a0a;">2541</div>
<div style="position:absolute;left:1269px;top:382px;width:62px;height:19px;background:#c8c8c8;border:1px solid #000;box-sizing:border-box;"></div>
<div style="position:absolute;left:1430px;top:382px;width:14px;height:19px;background:#006400;border:1px solid #000;box-sizing:border-box;"></div>
<div class="c r" style="right:219px;top:392px;font-size:13px;letter-spacing:-0.5px;color:#111;">31700</div>
<div class="c r" style="right:174px;top:392px;font-size:13px;letter-spacing:-0.5px;color:#111;color:#0a6a0a;">574</div>
<div style="position:absolute;left:1277px;top:400px;width:54px;height:18px;background:#c8c8c8;border:1px solid #000;box-sizing:border-box;"></div>
<div style="position:absolute;left:1430px;top:400px;width:6px;height:18px;background:#006400;border:1px solid #000;box-sizing:border-box;"></div>
<div class="c r" style="right:219px;top:410px;font-size:13px;letter-spacing:-0.5px;color:#111;">27700</div>
<div class="c r" style="right:174px;top:410px;font-size:13px;letter-spacing:-0.5px;color:#111;color:#0a6a0a;">228</div>
<div style="position:absolute;left:1275px;top:417px;width:56px;height:19px;background:#c8c8c8;border:1px solid #000;box-sizing:border-box;"></div>
<div style="position:absolute;left:1430px;top:417px;width:12px;height:19px;background:#8b0000;border:1px solid #000;box-sizing:border-box;"></div>
<div class="c r" style="right:219px;top:427px;font-size:13px;letter-spacing:-0.5px;color:#111;">28600</div>
<div class="c r" style="right:174px;top:427px;font-size:13px;letter-spacing:-0.5px;color:#111;color:#9a0c0c;">-482</div>
<div style="position:absolute;left:1277px;top:435px;width:54px;height:19px;background:#c8c8c8;border:1px solid #000;box-sizing:border-box;"></div>
<div style="position:absolute;left:1430px;top:435px;width:15px;height:19px;background:#8b0000;border:1px solid #000;box-sizing:border-box;"></div>
<div class="c r" style="right:219px;top:445px;font-size:13px;letter-spacing:-0.5px;color:#111;">27706</div>
<div class="c r" style="right:174px;top:445px;font-size:13px;letter-spacing:-0.5px;color:#111;color:#9a0c0c;">-614</div>
<div style="position:absolute;left:1283px;top:453px;width:48px;height:19px;background:#c8c8c8;border:1px solid #000;box-sizing:border-box;"></div>
<div style="position:absolute;left:1430px;top:453px;width:25px;height:19px;background:#8b0000;border:1px solid #000;box-sizing:border-box;"></div>
<div class="c r" style="right:219px;top:463px;font-size:13px;letter-spacing:-0.5px;color:#111;">24386</div>
<div class="c r" style="right:174px;top:463px;font-size:13px;letter-spacing:-0.5px;color:#111;color:#9a0c0c;">-1024</div>
<div style="position:absolute;left:1290px;top:471px;width:41px;height:19px;background:#c8c8c8;border:1px solid #000;box-sizing:border-box;"></div>
<div style="position:absolute;left:1430px;top:471px;width:13px;height:19px;background:#006400;border:1px solid #000;box-sizing:border-box;"></div>
<div class="c r" style="right:219px;top:481px;font-size:13px;letter-spacing:-0.5px;color:#111;">20798</div>
<div class="c r" style="right:174px;top:481px;font-size:13px;letter-spacing:-0.5px;color:#111;color:#0a6a0a;">500</div>
<div style="position:absolute;left:1278px;top:489px;width:53px;height:18px;background:#c8c8c8;border:1px solid #000;box-sizing:border-box;"></div>
<div style="position:absolute;left:1430px;top:489px;width:17px;height:18px;background:#006400;border:1px solid #000;box-sizing:border-box;"></div>
<div class="c r" style="right:219px;top:499px;font-size:13px;letter-spacing:-0.5px;color:#111;">27106</div>
<div class="c r" style="right:174px;top:499px;font-size:13px;letter-spacing:-0.5px;color:#111;color:#0a6a0a;">666</div>
<div style="position:absolute;left:1281px;top:506px;width:50px;height:19px;background:#c8c8c8;border:1px solid #000;box-sizing:border-box;"></div>
<div style="position:absolute;left:1430px;top:506px;width:16px;height:19px;background:#8b0000;border:1px solid #000;box-sizing:border-box;"></div>
<div class="c r" style="right:219px;top:516px;font-size:13px;letter-spacing:-0.5px;color:#111;">25388</div>
<div class="c r" style="right:174px;top:516px;font-size:13px;letter-spacing:-0.5px;color:#111;color:#9a0c0c;">-634</div>
<div style="position:absolute;left:1293px;top:524px;width:38px;height:19px;background:#c8c8c8;border:1px solid #000;box-sizing:border-box;"></div>
<div style="position:absolute;left:1430px;top:524px;width:39px;height:19px;background:#8b0000;border:1px solid #000;box-sizing:border-box;"></div>
<div class="c r" style="right:219px;top:534px;font-size:13px;letter-spacing:-0.5px;color:#111;">19611</div>
<div class="c r" style="right:174px;top:534px;font-size:13px;letter-spacing:-0.5px;color:#111;color:#9a0c0c;">-1607</div>
<div style="position:absolute;left:1298px;top:542px;width:33px;height:19px;background:#c8c8c8;border:1px solid #000;box-sizing:border-box;"></div>
<div style="position:absolute;left:1430px;top:542px;width:39px;height:19px;background:#8b0000;border:1px solid #000;box-sizing:border-box;"></div>
<div class="c r" style="right:219px;top:552px;font-size:13px;letter-spacing:-0.5px;color:#111;">16925</div>
<div class="c r" style="right:174px;top:552px;font-size:13px;letter-spacing:-0.5px;color:#111;color:#9a0c0c;">-1621</div>
<div style="position:absolute;left:1303px;top:560px;width:28px;height:19px;background:#c8c8c8;border:1px solid #000;box-sizing:border-box;"></div>
<div style="position:absolute;left:1430px;top:560px;width:4px;height:19px;background:#006400;border:1px solid #000;box-sizing:border-box;"></div>
<div class="c r" style="right:219px;top:570px;font-size:13px;letter-spacing:-0.5px;color:#111;">14570</div>
<div class="c r" style="right:174px;top:570px;font-size:13px;letter-spacing:-0.5px;color:#111;color:#0a6a0a;">128</div>
<div style="position:absolute;left:1287px;top:578px;width:44px;height:19px;background:#c8c8c8;border:1px solid #000;box-sizing:border-box;"></div>
<div style="position:absolute;left:1430px;top:578px;width:36px;height:19px;background:#006400;border:1px solid #000;box-sizing:border-box;"></div>
<div class="c r" style="right:219px;top:588px;font-size:13px;letter-spacing:-0.5px;color:#111;">22439</div>
<div class="c r" style="right:174px;top:588px;font-size:13px;letter-spacing:-0.5px;color:#111;color:#0a6a0a;">1473</div>
<div style="position:absolute;left:1282px;top:596px;width:49px;height:5px;background:#c8c8c8;border:1px solid #000;box-sizing:border-box;"></div>
<div style="position:absolute;left:1430px;top:596px;width:17px;height:5px;background:#006400;border:1px solid #000;box-sizing:border-box;"></div>
<div style="position:absolute;left:1330px;top:31px;width:1px;height:569px;background:#000;"></div>
<div style="position:absolute;left:1523px;top:31px;width:1px;height:569px;background:#000;"></div>
<div style="position:absolute;left:1523px;top:71px;width:6px;height:1px;background:#000;"></div>
<div class="c" style="left:1532px;top:73.5px;font-size:13.5px;letter-spacing:0.35px;color:#111;">2808,00</div>
<div style="position:absolute;left:1523px;top:106px;width:6px;height:1px;background:#000;"></div>
<div class="c" style="left:1532px;top:108.5px;font-size:13.5px;letter-spacing:0.35px;color:#111;">2807,50</div>
<div style="position:absolute;left:1523px;top:142px;width:6px;height:1px;background:#000;"></div>
<div class="c" style="left:1532px;top:144.5px;font-size:13.5px;letter-spacing:0.35px;color:#111;">2807,00</div>
<div style="position:absolute;left:1523px;top:177px;width:6px;height:1px;background:#000;"></div>
<div class="c" style="left:1532px;top:179.5px;font-size:13.5px;letter-spacing:0.35px;color:#111;">2806,50</div>
<div style="position:absolute;left:1523px;top:213px;width:6px;height:1px;background:#000;"></div>
<div class="c" style="left:1532px;top:215.5px;font-size:13.5px;letter-spacing:0.35px;color:#111;">2806,00</div>
<div style="position:absolute;left:1523px;top:249px;width:6px;height:1px;background:#000;"></div>
<div class="c" style="left:1532px;top:251.0px;font-size:13.5px;letter-spacing:0.35px;color:#111;">2805,50</div>
<div style="position:absolute;left:1523px;top:284px;width:6px;height:1px;background:#000;"></div>
<div class="c" style="left:1532px;top:286.5px;font-size:13.5px;letter-spacing:0.35px;color:#111;">2805,00</div>
<div style="position:absolute;left:1523px;top:320px;width:6px;height:1px;background:#000;"></div>
<div class="c" style="left:1532px;top:322.0px;font-size:13.5px;letter-spacing:0.35px;color:#111;">2804,50</div>
<div style="position:absolute;left:1523px;top:355px;width:6px;height:1px;background:#000;"></div>
<div class="c" style="left:1532px;top:357.5px;font-size:13.5px;letter-spacing:0.35px;color:#111;">2804,00</div>
<div style="position:absolute;left:1523px;top:391px;width:6px;height:1px;background:#000;"></div>
<div class="c" style="left:1532px;top:393.5px;font-size:13.5px;letter-spacing:0.35px;color:#111;">2803,50</div>
<div style="position:absolute;left:1523px;top:426px;width:6px;height:1px;background:#000;"></div>
<div class="c" style="left:1532px;top:428.5px;font-size:13.5px;letter-spacing:0.35px;color:#111;">2803,00</div>
<div style="position:absolute;left:1523px;top:462px;width:6px;height:1px;background:#000;"></div>
<div class="c" style="left:1532px;top:464.5px;font-size:13.5px;letter-spacing:0.35px;color:#111;">2802,50</div>
<div style="position:absolute;left:1523px;top:498px;width:6px;height:1px;background:#000;"></div>
<div class="c" style="left:1532px;top:500.0px;font-size:13.5px;letter-spacing:0.35px;color:#111;">2802,00</div>
<div style="position:absolute;left:1523px;top:533px;width:6px;height:1px;background:#000;"></div>
<div class="c" style="left:1532px;top:535.5px;font-size:13.5px;letter-spacing:0.35px;color:#111;">2801,50</div>
<div style="position:absolute;left:1523px;top:569px;width:6px;height:1px;background:#000;"></div>
<div class="c" style="left:1532px;top:571.5px;font-size:13.5px;letter-spacing:0.35px;color:#111;">2801,00</div>
<div style="position:absolute;left:1523px;top:35px;width:6px;height:1px;background:#000;"></div>
<svg style="position:absolute;left:1516px;top:220px" width="77" height="23"><polygon points="1,11.5 7.5,1 75.5,1 75.5,22 7.5,22" fill="#46464c" stroke="#0a0a0a" stroke-width="1.3"/></svg>
<div class="c" style="left:1532px;top:233.5px;font-size:13.5px;letter-spacing:0.35px;color:#fff;">2805,75</div>
<svg style="position:absolute;left:1492px;top:42px" width="16" height="25"><polygon points="1,1 12,12 1,23" fill="#000"/><rect x="10" y="1" width="5" height="24" fill="#000"/></svg>
<div style="position:absolute;left:1573px;top:34px;width:18px;height:19px;background:#3a3a3c;"></div>
<div class="t" style="left:1577px;top:43.5px;font-size:14px;color:#e0e0e0;">F</div>
<div style="position:absolute;left:915px;top:584px;width:88px;height:16px;background:#c8c8c8;border:1px solid #000;box-sizing:border-box;"></div>
<div style="position:absolute;left:925px;top:584px;height:16px;line-height:16px;white-space:nowrap;font-size:12.5px;letter-spacing:-0.2px;color:#111;">VOL 8426</div>
<div style="position:absolute;left:1004px;top:584px;width:88px;height:16px;background:#c8c8c8;border:1px solid #000;box-sizing:border-box;"></div>
<div style="position:absolute;left:1014px;top:584px;height:16px;line-height:16px;white-space:nowrap;font-size:12.5px;letter-spacing:-0.2px;color:#111;">VOL 12840</div>
<div style="position:absolute;left:1094px;top:584px;width:88px;height:16px;background:#c8c8c8;border:1px solid #000;box-sizing:border-box;"></div>
<div style="position:absolute;left:1104px;top:584px;height:16px;line-height:16px;white-space:nowrap;font-size:12.5px;letter-spacing:-0.2px;color:#111;">VOL 40305</div>
<div style="position:absolute;left:1184px;top:584px;width:88px;height:16px;background:#c8c8c8;border:1px solid #000;box-sizing:border-box;"></div>
<div style="position:absolute;left:1194px;top:584px;height:16px;line-height:16px;white-space:nowrap;font-size:12.5px;letter-spacing:-0.2px;color:#111;">VOL 15254</div>
<div style="position:absolute;left:913px;top:600px;width:680px;height:1px;background:#d8d8d8;"></div>
<div style="position:absolute;left:913px;top:675px;width:680px;height:1px;background:#1a1a1a;"></div>
<div style="position:absolute;left:913px;top:775px;width:611px;height:1px;background:#000;"></div>
<div style="position:absolute;left:1523px;top:601px;width:1px;height:175px;background:#000;"></div>
<div style="position:absolute;left:915px;top:610px;width:88px;height:66px;background:#006400;border:1px solid #000;box-sizing:border-box;"></div>
<div style="position:absolute;left:1004px;top:675px;width:88px;height:88px;background:#8b0000;border:1px solid #000;box-sizing:border-box;"></div>
<div style="position:absolute;left:1094px;top:625px;width:88px;height:51px;background:#006400;border:1px solid #000;box-sizing:border-box;"></div>
<div style="position:absolute;left:1184px;top:675px;width:88px;height:11px;background:#8b0000;border:1px solid #000;box-sizing:border-box;"></div>
<div style="position:absolute;left:1137px;top:676px;width:1px;height:22px;background:#000;"></div>
<div style="position:absolute;left:1227px;top:666px;width:1px;height:9px;background:#000;"></div>
<div style="position:absolute;left:1227px;top:686px;width:1px;height:22px;background:#000;"></div>
<div style="position:absolute;left:1047px;top:673px;width:1px;height:2px;background:#000;"></div>
<div style="position:absolute;left:1523px;top:621px;width:6px;height:1px;background:#000;"></div>
<div class="c" style="left:1532px;top:624px;font-size:13.5px;letter-spacing:0.35px;color:#111;">2000</div>
<div style="position:absolute;left:1523px;top:648px;width:6px;height:1px;background:#000;"></div>
<div class="c" style="left:1532px;top:650.5px;font-size:13.5px;letter-spacing:0.35px;color:#111;">1000</div>
<div style="position:absolute;left:1523px;top:703px;width:6px;height:1px;background:#000;"></div>
<div class="c" style="left:1532px;top:706px;font-size:13.5px;letter-spacing:0.35px;color:#111;">-1000</div>
<div style="position:absolute;left:1523px;top:730px;width:6px;height:1px;background:#000;"></div>
<div class="c" style="left:1532px;top:733px;font-size:13.5px;letter-spacing:0.35px;color:#111;">-2000</div>
<div style="position:absolute;left:1523px;top:756px;width:6px;height:1px;background:#000;"></div>
<div class="c" style="left:1532px;top:759.5px;font-size:13.5px;letter-spacing:0.35px;color:#111;">-3000</div>
<div style="position:absolute;left:1523px;top:675px;width:6px;height:1px;background:#000;"></div>
<div class="c" style="left:1532px;top:677px;font-size:13.5px;color:#111;">0</div>
<svg style="position:absolute;left:1516px;top:674px" width="77" height="23"><polygon points="1,11.5 7.5,1 75.5,1 75.5,22 7.5,22" fill="#46464c" stroke="#0a0a0a" stroke-width="1.3"/></svg>
<div class="c" style="left:1531px;top:687px;font-size:13.5px;letter-spacing:0.35px;color:#fff;">-352</div>
<div style="position:absolute;left:958px;top:776px;width:1px;height:5px;background:#000;"></div>
<div class="c" style="left:928px;top:796px;width:60px;text-align:center;font-size:13.5px;letter-spacing:-0.3px;color:#111;">22:57</div>
<div style="position:absolute;left:1047px;top:776px;width:1px;height:5px;background:#000;"></div>
<div class="c" style="left:1017px;top:796px;width:60px;text-align:center;font-size:13.5px;letter-spacing:-0.3px;color:#111;">22:59</div>
<div style="position:absolute;left:1137px;top:776px;width:1px;height:5px;background:#000;"></div>
<div class="c" style="left:1107px;top:796px;width:60px;text-align:center;font-size:13.5px;letter-spacing:-0.3px;color:#111;">23:01</div>
<div style="position:absolute;left:1227px;top:776px;width:1px;height:5px;background:#000;"></div>
<div class="c" style="left:1197px;top:796px;width:60px;text-align:center;font-size:13.5px;letter-spacing:-0.3px;color:#111;">23:06</div>
<div style="position:absolute;left:913px;top:809px;width:680px;height:15px;background:#333335;"></div>
<div style="position:absolute;left:913px;top:824px;width:680px;height:1px;background:#444446;"></div>
<div style="position:absolute;left:1395px;top:810px;width:78px;height:14px;background:linear-gradient(#707070,#505050 50%,#3c3c3c 50%,#3c3c3c);border:1px solid #6a6a6a;box-sizing:border-box;"></div>
<div style="position:absolute;left:1399px;top:813px;width:1px;height:8px;background:#999;"></div>
<div style="position:absolute;left:1401px;top:813px;width:1px;height:8px;background:#999;"></div>
<div style="position:absolute;left:913px;top:809px;width:679px;height:1px;background:#262628;"></div>
<div style="position:absolute;left:912px;top:809px;width:1px;height:45px;background:#48484a;"></div>
<div style="position:absolute;left:1582px;top:811px;width:9px;height:12px;background:#000;"></div>
<svg style="position:absolute;left:1585px;top:813px" width="4" height="8"><polygon points="0,0 4,4.0 0,8" fill="#fff"/></svg>
<div style="position:absolute;left:913px;top:27px;width:686px;height:5px;background:#2e2e30;"></div>
<div style="position:absolute;left:0px;top:855px;width:1599px;height:1px;background:#444446;"></div>
<div style="position:absolute;left:1592px;top:809px;width:1px;height:16px;background:#444446;"></div>
<svg style="position:absolute;left:0;top:0" width="1599" height="856">
<polyline points="625,218 942,117 1228,189.6" fill="none" stroke="#ffff00" stroke-width="5" stroke-linejoin="round"/>
<polygon points="613,223.6 634,208.5 639.5,223" fill="#ffff00"/>
<polygon points="1248.5,194.5 1226,180.5 1222,196" fill="#ffff00"/>
</svg>
<div class="t" style="left:637px;top:272px;font-size:25.5px;color:#ffff00;-webkit-text-stroke:0.3px #ffff00;line-height:30px;height:30px;margin-top:-15.5px;">отключить профиль</div>
</body></html>
